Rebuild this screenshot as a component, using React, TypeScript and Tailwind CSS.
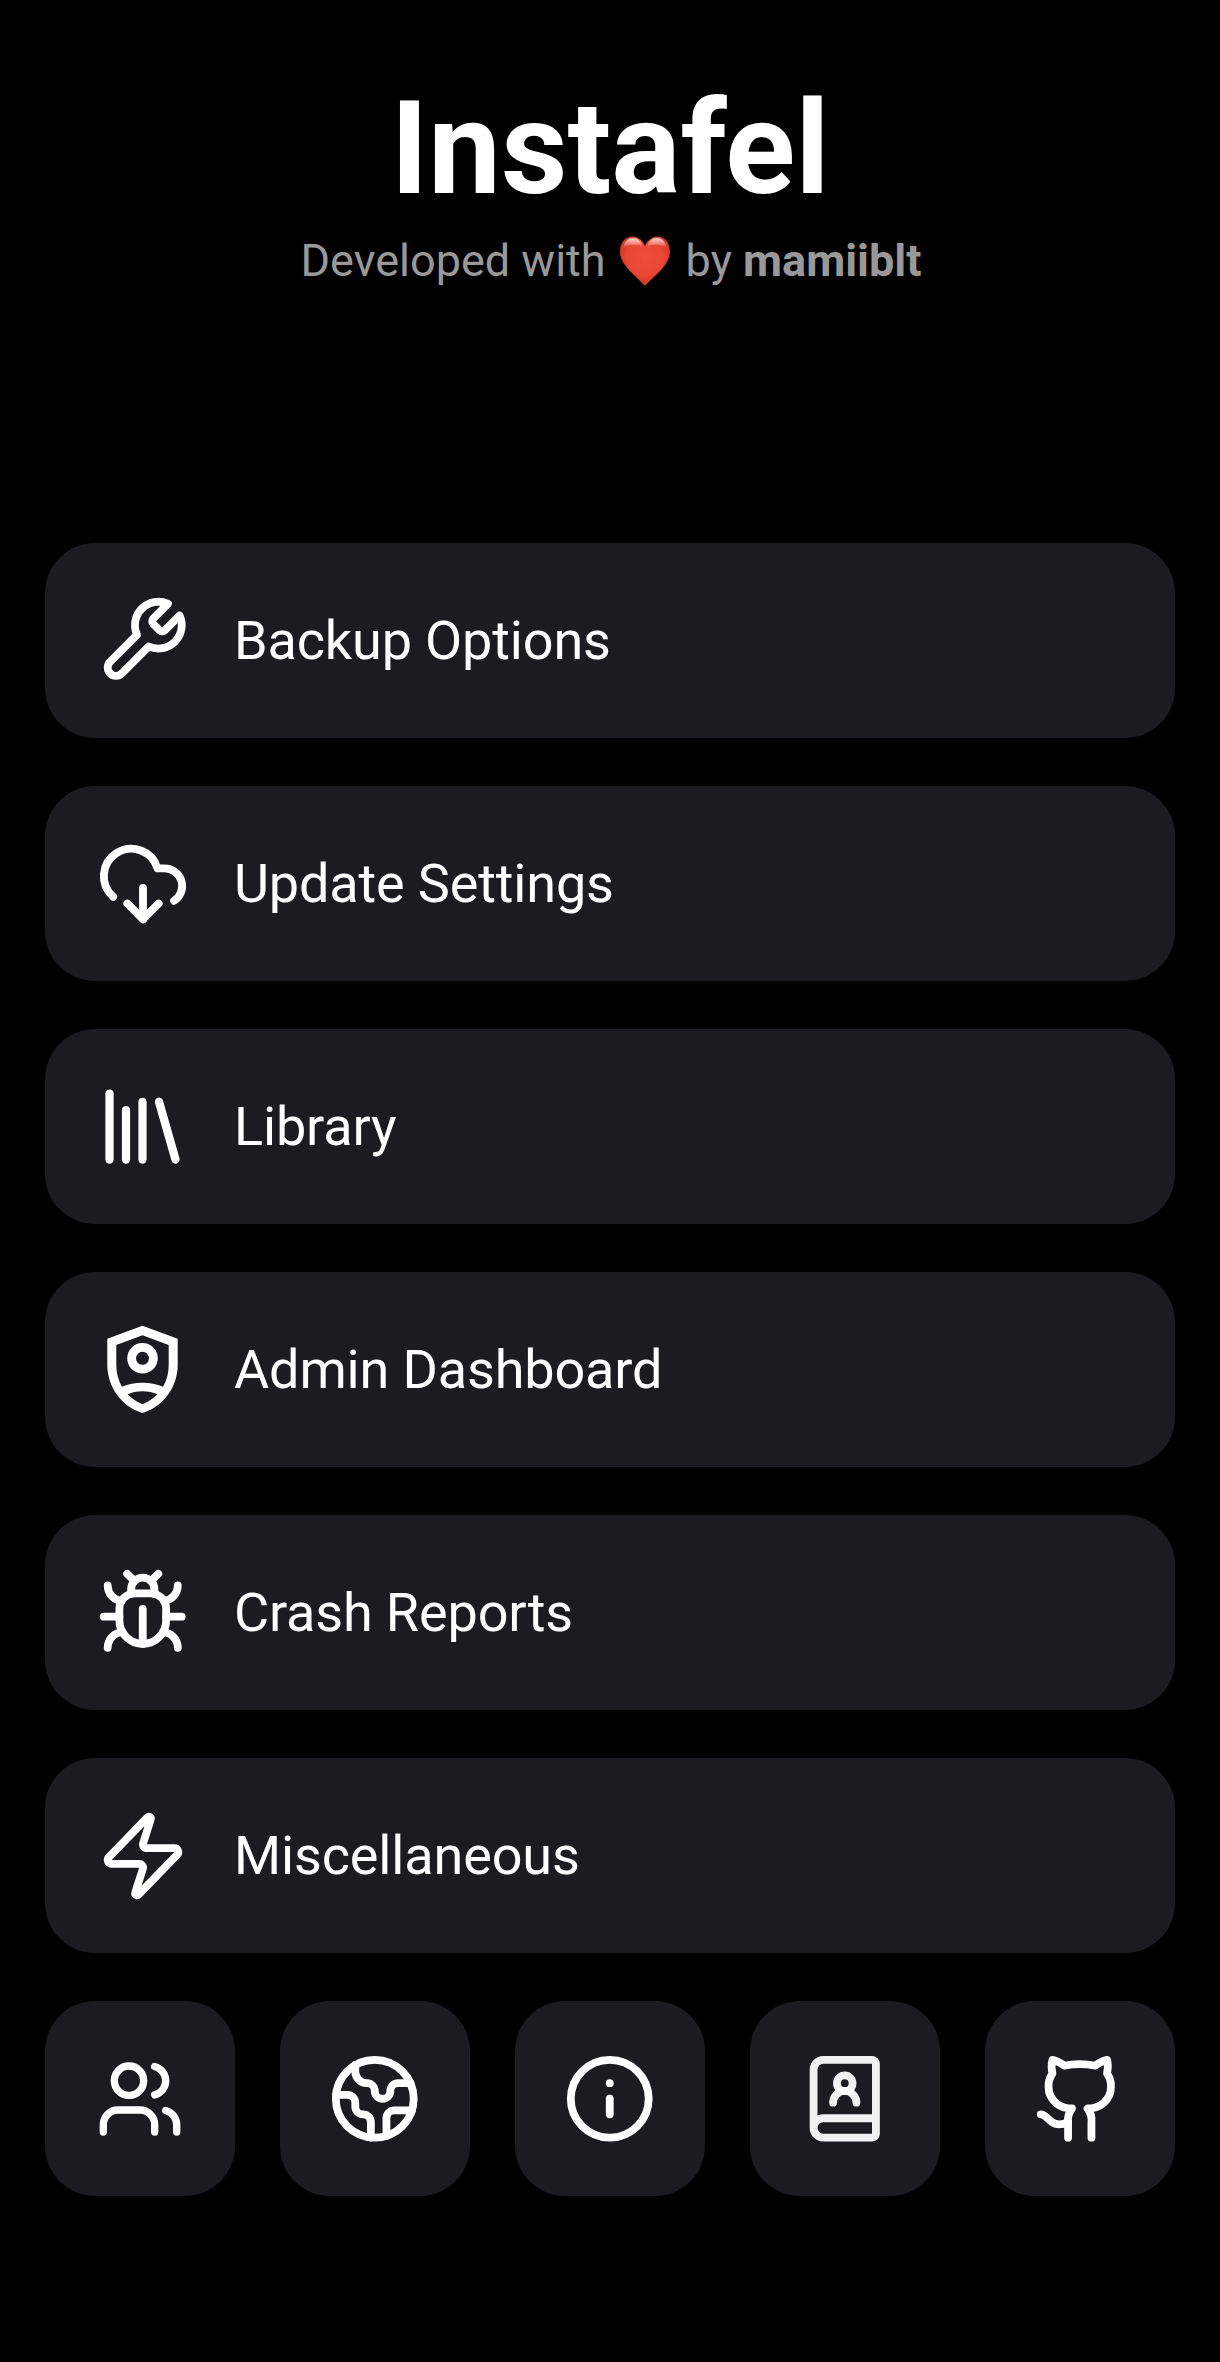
import type { ReactNode } from "react";

function Stroke({ size, children }: { size: number; children: ReactNode }) {
  return (
    <svg
      width={size}
      height={size}
      viewBox="0 0 24 24"
      fill="none"
      stroke="currentColor"
      strokeWidth={2}
      strokeLinecap="round"
      strokeLinejoin="round"
      className="shrink-0"
    >
      {children}
    </svg>
  );
}

const menu: { label: string; icon: ReactNode }[] = [
  {
    label: "Backup Options",
    icon: (
      <Stroke size={93.500}>
        <path d="M14.7 6.3a1 1 0 0 0 0 1.4l1.6 1.6a1 1 0 0 0 1.4 0l3.77-3.77a6 6 0 0 1-7.94 7.94l-6.91 6.91a2.12 2.12 0 0 1-3-3l6.91-6.91a6 6 0 0 1 7.94-7.94l-3.76 3.76z" />
      </Stroke>
    ),
  },
  {
    label: "Update Settings",
    icon: (
      <Stroke size={94}>
        <path d="M12 13v8l-4-4" />
        <path d="m12 21 4-4" />
        <path d="M4.393 15.269A7 7 0 1 1 15.71 8h1.79a4.5 4.5 0 0 1 2.436 8.284" />
      </Stroke>
    ),
  },
  {
    label: "Library",
    icon: (
      <Stroke size={99}>
        <path d="m16 6 4 14" />
        <path d="M12 6v14" />
        <path d="M8 8v12" />
        <path d="M4 4v16" />
      </Stroke>
    ),
  },
  {
    label: "Admin Dashboard",
    icon: (
      <svg width={99} height={99} viewBox="0 0 99 99" fill="currentColor" fillRule="evenodd" className="shrink-0">
        <path d="M49.5 5.7 84.7 18.7V45C84.7 66 71 86.500 49.5 93 28 86.500 14.3 66 14.3 45V18.7ZM49.5 15.3 23.3 25V45Q23.3 57 29 66.7 38.5 62.7 49.5 62.7 60.500 62.7 70 66.7 75.700 57 75.700 45V25ZM34.7 74.3Q41 71.3 49.5 71.3 58 71.3 64.3 74.3 58 81 49.5 84.3 41 81 34.7 74.3Z" />
        <circle cx="49.5" cy="38.3" r="10.900" fill="none" stroke="currentColor" strokeWidth="8.800" />
      </svg>
    ),
  },
  {
    label: "Crash Reports",
    icon: (
      <Stroke size={93.500}>
        <path d="M12 20v-9" />
        <path d="M14 7a4 4 0 0 1 4 4v3a6 6 0 0 1-12 0v-3a4 4 0 0 1 4-4z" />
        <path d="M14.12 3.88 16 2" />
        <path d="M21 21a4 4 0 0 0-3.81-4" />
        <path d="M21 5a4 4 0 0 1-3.55 3.97" />
        <path d="M22 13h-4" />
        <path d="M3 21a4 4 0 0 1 3.81-4" />
        <path d="M3 5a4 4 0 0 0 3.55 3.97" />
        <path d="M6 13H2" />
        <path d="m8 2 1.88 1.88" />
        <path d="M9 7.13V6a3 3 0 1 1 6 0v1.13" />
      </Stroke>
    ),
  },
  {
    label: "Miscellaneous",
    icon: (
      <Stroke size={94}>
        <path d="M4 14a1 1 0 0 1-.78-1.63l9.9-10.2a.5.5 0 0 1 .86.46l-1.92 6.02A1 1 0 0 0 13 10h7a1 1 0 0 1 .78 1.63l-9.9 10.2a.5.5 0 0 1-.86-.46l1.92-6.02A1 1 0 0 0 11 14z" />
      </Stroke>
    ),
  },
];

const shortcuts: { name: string; icon: ReactNode }[] = [
  {
    name: "users",
    icon: (
      <Stroke size={88}>
        <path d="M16 21v-2a4 4 0 0 0-4-4H6a4 4 0 0 0-4 4v2" />
        <circle cx="9" cy="7" r="4" />
        <path d="M22 21v-2a4 4 0 0 0-3-3.87" />
        <path d="M16 3.13a4 4 0 0 1 0 7.75" />
      </Stroke>
    ),
  },
  {
    name: "earth",
    icon: (
      <Stroke size={93.500}>
        <path d="M21.54 15H17a2 2 0 0 0-2 2v4.54" />
        <path d="M7 3.34V5a3 3 0 0 0 3 3a2 2 0 0 1 2 2c0 1.1.9 2 2 2a2 2 0 0 0 2-2c0-1.1.9-2 2-2h3.17" />
        <path d="M11 21.95V18a2 2 0 0 0-2-2a2 2 0 0 1-2-2v-1a2 2 0 0 0-2-2H2.05" />
        <circle cx="12" cy="12" r="10" />
      </Stroke>
    ),
  },
  {
    name: "info",
    icon: (
      <Stroke size={93.500}>
        <circle cx="12" cy="12" r="10" />
        <path d="M12 16v-4" />
        <path d="M12 8h.01" />
      </Stroke>
    ),
  },
  {
    name: "contacts",
    icon: (
      <Stroke size={93.500}>
        <g strokeOpacity={0.94}>
          <path d="M15 13a3 3 0 1 0-6 0" />
          <path d="M4 19.5v-15A2.5 2.5 0 0 1 6.5 2H19a1 1 0 0 1 1 1v18a1 1 0 0 1-1 1H6.5a1 1 0 0 1 0-5H20" />
          <circle cx="12" cy="8" r="2" />
        </g>
      </Stroke>
    ),
  },
  {
    name: "github",
    icon: (
      <Stroke size={93.500}>
        <path d="M15 22v-4a4.8 4.8 0 0 0-1-3.5c3 0 6-2 6-5.5.08-1.25-.27-2.48-1-3.5.28-1.15.28-2.35 0-3.5 0 0-1 0-3 1.5-2.64-.5-5.36-.5-8 0C6 2 5 2 5 2c-.3 1.15-.3 2.35 0 3.5A5.403 5.403 0 0 0 4 9c0 3.5 3 5.5 6 5.5-.39.49-.68 1.05-.85 1.65-.17.6-.22 1.23-.15 1.85v4" />
        <path d="M9 18c-4.51 2-5-2-7-2" />
      </Stroke>
    ),
  },
];

function Heart() {
  return (
    <svg width={50} height={50} viewBox="0 0 50 50" className="mr-[16px] ml-[14px] shrink-0">
      <defs>
        <radialGradient id="body" cx=".5" cy=".42" r=".62">
          <stop offset="0" stopColor="#ef4f3c" />
          <stop offset=".6" stopColor="#ea4634" />
          <stop offset="1" stopColor="#bf3023" />
        </radialGradient>
        <linearGradient id="gloss" x1="0" y1="0" x2="0" y2="1">
          <stop offset="0" stopColor="#fff" stopOpacity=".8" />
          <stop offset="1" stopColor="#fff" stopOpacity="0" />
        </linearGradient>
      </defs>
      <path d="M25 10C28 3 33 .5 37.500 .5 45 .5 50 7 50 15.500 50 29 35 39 25 50 15 39 0 29 0 15.500 0 7 5 .5 12.500 .5 17 .5 22 3 25 10Z" fill="url(#body)" />
      <path d="M3 12C4.500 5 8.500 2 13 2 18 2 21 5 22.500 10 17 8 9 8 3 12Z" fill="url(#gloss)" />
      <path d="M47 12C45.500 5 41.500 2 37 2 32 2 29 5 27.500 10 33 8 41 8 47 12Z" fill="url(#gloss)" />
    </svg>
  );
}

export default function App() {
  return (
    <main className="flex h-[2362px] w-[1220px] flex-col bg-black px-[45px] font-[Roboto,sans-serif] text-white">
      <header className="flex h-[543px] shrink-0 flex-col items-center pt-[74px]">
        <h1 className="text-[129.5px] leading-[150px] font-bold">Instafel</h1>
        <div className="mt-[7px] flex h-[60px] items-center pl-[2px] text-[45px] leading-[60px] whitespace-pre text-[#999999]">
          <span>Developed with</span>
          <Heart />
          <span>
            by <b className="font-bold">mamiiblt</b>
          </span>
        </div>
      </header>
      <nav className="flex flex-col gap-[48px]">
        {menu.map((item) => (
          <button key={item.label} className="flex h-[195px] items-center rounded-[50px] bg-[#1b1c20] pl-[45px] text-left">
            <span className="flex w-[105px] justify-center">{item.icon}</span>
            <span className="ml-[39px] text-[54px] leading-[64px] tracking-[-0.15px]">{item.label}</span>
          </button>
        ))}
        <div className="grid grid-cols-5 gap-[45px]">
          {shortcuts.map((item) => (
            <button key={item.name} aria-label={item.name} className="flex h-[195px] items-center justify-center rounded-[50px] bg-[#1b1c20]">
              {item.icon}
            </button>
          ))}
        </div>
      </nav>
    </main>
  );
}
